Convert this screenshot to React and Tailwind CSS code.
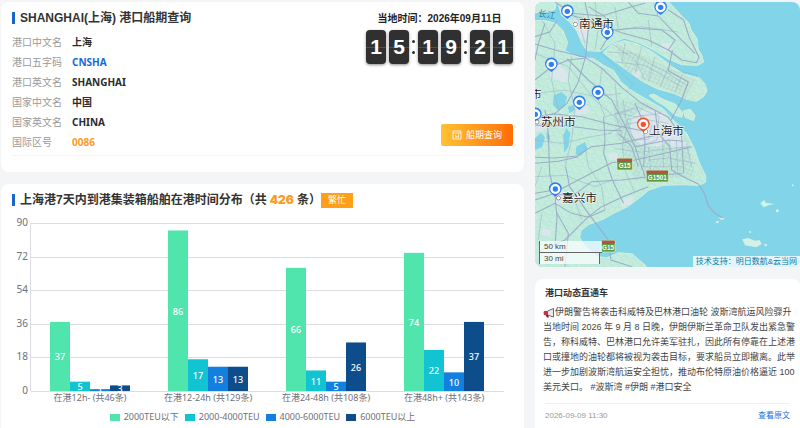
const info = [
  { label: '港口中文名', value: '上海', color: 'text-[#2b2b2b]' },
  { label: '港口五字码', value: 'CNSHA', color: 'text-[#1568d6]' },
  { label: '港口英文名', value: 'SHANGHAI', color: 'text-[#2b2b2b]' },
  { label: '国家中文名', value: '中国', color: 'text-[#2b2b2b]' },
  { label: '国家英文名', value: 'CHINA', color: 'text-[#2b2b2b]' },
  { label: '国际区号', value: '0086', color: 'text-[#ff9a1f]' },
];

const series = [
  { name: '2000TEU以下', fill: '#50e5ad', swatch: 'bg-[#50e5ad]' },
  { name: '2000-4000TEU', fill: '#12c3d2', swatch: 'bg-[#12c3d2]' },
  { name: '4000-6000TEU', fill: '#1380df', swatch: 'bg-[#1380df]' },
  { name: '6000TEU以上', fill: '#0d4d8b', swatch: 'bg-[#0d4d8b]' },
];

const groups = [
  { label: '在港12h- (共46条)', values: [37, 5, 1, 3] },
  { label: '在港12-24h (共129条)', values: [86, 17, 13, 13] },
  { label: '在港24-48h (共108条)', values: [66, 11, 5, 26] },
  { label: '在港48h+ (共143条)', values: [74, 22, 10, 37] },
];

const ticks = [0, 18, 36, 54, 72, 90];

const sans = 'font-["Noto_Sans","Noto_Sans_CJK_SC",sans-serif]';
const arial = 'font-["Liberation_Sans","Noto_Sans_CJK_SC",sans-serif]';

function CardTitle({ children }) {
  return (
    <h2 className={`flex items-center text-[12px] leading-4 font-bold text-[#333] ${arial}`}>
      <span className="mr-[5px] h-3 w-[3px] bg-[#1767c9]" />
      {children}
    </h2>
  );
}

function Digit({ value }) {
  return (
    <span className="relative flex h-[34px] w-5 items-center justify-center rounded-[4px] bg-[#303030] text-[21px] font-bold text-white shadow-[0_1px_3px_rgba(0,0,0,0.45)]">
      {value}
      <span className="absolute inset-x-0 top-1/2 h-px bg-white/15" />
    </span>
  );
}

function Colon() {
  return (
    <span className="flex w-[3px] flex-col gap-2">
      <span className="h-[3px] w-[3px] rounded-full bg-[#303030]" />
      <span className="h-[3px] w-[3px] rounded-full bg-[#303030]" />
    </span>
  );
}

function Clock() {
  return (
    <div className={`flex flex-col items-center ${arial}`}>
      <p className="text-[10px] leading-4 font-bold text-[#222]">当地时间：2026年09月11日</p>
      <div className="mt-[3px] flex items-center gap-[3px]">
        <Digit value="1" />
        <Digit value="5" />
        <Colon />
        <Digit value="1" />
        <Digit value="9" />
        <Colon />
        <Digit value="2" />
        <Digit value="1" />
      </div>
    </div>
  );
}

function PortCard() {
  return (
    <section className="rounded-lg bg-white px-[11px] pt-2 pb-4">
      <div className="flex justify-between">
        <div>
          <CardTitle>SHANGHAI(上海) 港口船期查询</CardTitle>
          <dl className={`mt-[6px] text-[10px] leading-5 ${sans}`}>
            {info.map((row) => (
              <div key={row.label} className="flex">
                <dt className="w-[60px] text-[#999]">{row.label}</dt>
                <dd className={`font-bold ${row.color}`}>{row.value}</dd>
              </div>
            ))}
          </dl>
        </div>
        <div className="flex flex-col items-end justify-between pt-[1px] pb-[6px]">
          <Clock />
          <button
            className={`flex h-[22px] w-[72px] items-center justify-center gap-1 rounded-[2px] bg-linear-to-r from-[#ffc233] to-[#ff6c02] text-[9px] text-white ${sans}`}
          >
            <svg viewBox="0 0 20 20" className="h-[10px] w-[10px]" fill="none" stroke="#fff" strokeWidth="1.6">
              <path d="M2 2h16v16H2zM2 6h16M6 10l6 5M13 9v6M6 14h4" />
            </svg>
            船期查询
          </button>
        </div>
      </div>
      <div className="mt-[3px] h-px bg-[#f5f5f6]" />
    </section>
  );
}

function BarChart() {
  const left = 30;
  const bottom = 178;
  const step = 118;
  const bar = 20;
  const y = (v) => bottom - (v * 168) / 90;
  return (
    <svg viewBox="0 0 523 192" className={`block w-full ${sans}`} fontSize="9" role="img" aria-label="在港时间分布">
      {ticks.map((t) => (
        <g key={t}>
          <line x1={left} x2="503" y1={Math.round(y(t)) + 0.5} y2={Math.round(y(t)) + 0.5} stroke="#dcdce2" />
          <text x="27" y={y(t) + 3} textAnchor="end" fill="#6e7079" fontSize="10">
            {t}
          </text>
        </g>
      ))}
      <line x1="29.5" x2="29.5" y1="10" y2="178" stroke="#dcdce2" />
      {groups.map((g, i) => {
        const center = left + step * i + step / 2;
        return (
          <g key={g.label}>
            {g.values.map((v, j) => (
              <rect
                key={j}
                x={center - bar * 2 + bar * j}
                y={y(v)}
                width={bar}
                height={bottom - y(v)}
                fill={series[j].fill}
              />
            ))}
            {g.values.map((v, j) => (
              <text
                key={j}
                x={center - bar * 1.5 + bar * j}
                y={(y(v) + bottom) / 2 + 4}
                textAnchor="middle"
                fill="#fff"
                fontWeight="500"
              >
                {v}
              </text>
            ))}
            <text x={center} y="188" textAnchor="middle" fill="#6e7079">
              {g.label}
            </text>
          </g>
        );
      })}
    </svg>
  );
}

function ChartCard() {
  return (
    <section className="flex-1 rounded-t-lg bg-white pt-2">
      <div className="px-[11px]">
        <CardTitle>
          上海港7天内到港集装箱船舶在港时间分布（共
          <span className='mx-[3px] font-["Inter",sans-serif] font-black text-[#ff9a1f]'>426</span>
          条）
          <span className="bg-[#ff9f1a] px-[7px] text-[9px] leading-[15px] font-normal text-white">繁忙</span>
        </CardTitle>
      </div>
      <div className="mt-[5px]">
        <BarChart />
      </div>
      <ul className={`mt-1 flex justify-center gap-[6px] pb-1 text-[9px] leading-4 text-[#6e7079] ${sans}`}>
        {series.map((s) => (
          <li key={s.name} className="flex items-center gap-1">
            <span className={`h-[7px] w-[10px] ${s.swatch}`} />
            {s.name}
          </li>
        ))}
      </ul>
    </section>
  );
}

const pins = [
  [97, 55],
  [377, 43],
  [217, 118],
  [49, 214],
  [189, 298],
  [133, 328],
  [1, 364],
  [61, 588],
];

const cities = [
  { name: '南通市', x: 132, y: 84, dot: [121, 73] },
  { name: '苏州市', x: 17, y: 377, dot: [6, 366] },
  { name: '上海市', x: 342, y: 405, dot: [332, 395] },
  { name: '嘉兴市', x: 81, y: 607, dot: [70, 594] },
];

const roadSigns = [
  { name: 'G15', x: 246, y: 475, w: 46 },
  { name: 'G1501', x: 334, y: 511, w: 66 },
  { name: 'G15', x: 198, y: 721, w: 42 },
];

const mainland =
  'M0 62 L30 62 L62 70 L84 92 L98 128 L90 152 L108 162 L132 172 L176 176 L206 196 L236 212 L258 246 L290 272 L342 302 L384 326 L410 356 L440 384 L456 402 L478 446 L492 486 L512 528 L512 546 L492 556 L440 554 L384 556 L342 570 L318 590 L278 620 L236 640 L204 658 L160 674 L138 692 L134 712 L150 740 L184 768 L214 774 L250 758 L292 762 L330 795 L340 810 L0 810 Z';
const northShore =
  'M66 0 L80 46 L106 68 L126 94 L142 132 L156 152 L196 154 L232 128 L268 114 L312 128 L356 150 L398 176 L440 194 L488 196 L506 186 L500 164 L490 150 L486 116 L468 90 L462 70 L440 48 L420 26 L396 0 Z';
const chongming =
  'M204 158 L232 132 L268 122 L306 132 L350 154 L402 192 L446 222 L494 234 L510 252 L516 272 L506 290 L484 304 L456 298 L416 280 L366 266 L322 244 L286 218 L252 194 Z';

const majorRoads = [
  'M0 132 L60 150 L150 172 L200 204 L260 262 L320 310 L400 352 L440 410 L446 520',
  'M0 110 L44 96 L66 62 M30 70 L10 130 L0 180',
  'M150 6 L162 60 L152 170 L128 250 L96 310 L60 340 L0 356',
  'M0 240 L50 200 L100 180 L152 174',
  'M96 176 L160 240 L230 300 L272 380 L300 440 L330 530',
  'M0 350 L60 342 L140 350 L230 374 L330 394',
  'M0 376 L100 378 L190 390 L260 392',
  'M0 472 L60 474 L126 468 L170 440 L260 430 L340 410 L400 400',
  'M0 490 L70 484 L130 470',
  'M30 330 L40 400 L44 520 L60 590 L66 650 L60 740',
  'M92 500 L104 560 L160 640 L220 720',
  'M0 580 L80 566 L160 524 L230 488 L300 480 L380 462 L470 440',
  'M0 600 L60 580 L110 590 L170 545 L260 540 L360 528 L440 520',
  'M340 560 L260 592 L200 620 L160 650 L90 720 L20 750',
  'M206 350 L210 420 L206 460 L232 540 L266 610',
  'M60 610 L110 640 L160 652 L210 630',
  'M66 640 L100 700 L90 800 M0 640 L60 610',
  'M300 310 L322 360 L330 430 L326 500',
  'M360 330 L370 400 L404 440 L410 510 L440 528 L490 552',
  'M300 440 L400 420 L446 424',
  'M250 400 L290 440 L310 500',
  'M218 716 L228 780 L290 800',
  'M280 6 L310 40 L370 48 L400 80 L480 160',
  'M86 40 L160 60 L260 98 L340 120 L400 150 L440 180 L484 188 L492 172 L462 110 L446 60 L400 30',
  'M160 20 L210 50 L220 110 L196 150',
  'M60 6 L110 40 L200 48 L290 20 L330 10',
  'M384 6 L366 44 M400 150 L420 120 L380 90 L300 84 L240 90',
  'M412 150 L400 212 L460 246 L440 300 L408 360',
];

const minorRoads = [
  'M0 160 L100 200 L180 300 L250 360 L300 420',
  'M20 60 L60 130 L50 240 L70 330',
  'M110 170 L100 240 L120 330 L110 420 L90 500',
  'M200 206 L190 300 L210 350 L290 330',
  'M240 250 L250 340 L300 350 L380 340',
  'M0 280 L90 270 L180 290 L260 280',
  'M0 420 L80 430 L170 410 L230 400',
  'M0 530 L90 526 L180 560 L230 540',
  'M150 440 L160 500 L200 560 L210 630',
  'M20 500 L0 560 M20 640 L10 720 M120 600 L140 660',
  'M264 300 L276 380 L262 440 L270 510 L300 580',
  'M240 340 L310 322 L372 350 L366 420 L310 440 L262 410 Z',
  'M276 360 L322 346 L350 376 L340 418 L296 420 Z',
  'M220 400 L280 372 L340 360 L400 370',
  'M240 446 L320 456 L400 446 L460 440',
  'M382 400 L386 500 M424 420 L428 516 M456 440 L470 500 M340 440 L350 540',
  'M340 480 L400 474 L480 490 M320 500 L440 500',
  'M100 30 L130 60 L150 130 M180 6 L190 90 L180 150',
  'M240 20 L250 90 L320 80 L430 96 M340 60 L350 140',
  'M230 130 L300 180 L330 240 M270 130 L260 190 M320 140 L300 220 M360 170 L340 244 M400 200 L376 262 M440 226 L420 276',
  'M216 156 L290 160 L400 220 L460 260 M240 186 L330 196 L440 260',
];

const lakes = [
  'M56 286 L80 276 L96 290 L90 318 L70 330 L54 316 Z',
  'M98 320 L116 314 L120 330 L104 340 Z',
  'M84 408 L94 384 L106 400 L100 440 L88 458 Z',
  'M124 440 L150 426 L158 446 L136 468 L122 462 Z',
  'M0 414 L18 398 L30 412 L22 440 L0 450 Z',
  'M36 392 L46 410 L42 430 L34 414 Z',
];

const urban = [
  'M290 350 L330 326 L384 336 L408 366 L412 410 L372 440 L316 436 L286 400 Z',
  'M110 60 L150 64 L160 100 L150 126 L134 110 Z',
  'M44 200 L70 190 L100 220 L96 246 L74 244 L46 230 Z',
  'M50 20 L90 20 L92 52 L64 44 Z',
  'M378 132 L404 130 L410 146 L388 152 Z',
  'M290 216 L320 212 L316 232 L298 232 Z',
  'M116 318 L158 316 L164 340 L120 344 Z',
  'M220 460 L248 458 L250 480 L222 480 Z',
  'M260 600 L296 588 L290 612 L262 620 Z',
  'M0 370 L30 352 L40 386 L4 396 Z',
  'M60 570 L90 576 L84 612 L56 606 Z',
  'M20 684 L50 690 L44 712 L22 706 Z',
  'M400 396 L440 400 L456 440 L410 444 Z',
];

function Pin({ x, y, color }) {
  return (
    <g transform={`translate(${x} ${y})`}>
      <path d="M0 2 L-11 -7 A19 19 0 1 1 11 -7 Z" fill={color} />
      <circle cy="-21" r="15" fill="#fff" />
      <circle cy="-21" r="8" fill={color} />
    </g>
  );
}

function PortMap() {
  return (
    <section className="relative overflow-hidden rounded-lg">
      <svg
        viewBox="0 6 795 795"
        className="block aspect-square w-full bg-[#82d5e8] font-['Noto_Sans_CJK_SC',sans-serif]"
        role="img"
        aria-label="上海港地图"
      >
        <defs>
          <pattern id="fields" width="27" height="23" patternUnits="userSpaceOnUse" patternTransform="rotate(14)">
            <path d="M0 3 H16 M16 0 V14 M6 14 H27 M24 14 V23 M6 14 V23" stroke="#aed6cf" strokeWidth="1.2" fill="none" />
          </pattern>
          <pattern id="blocks" width="12" height="11" patternUnits="userSpaceOnUse" patternTransform="rotate(24)">
            <path d="M0 3 H12 M4 0 V11" stroke="#a5c0c4" strokeWidth="1.1" fill="none" />
          </pattern>
          <clipPath id="land">
            <path d={mainland} />
            <path d={northShore} />
            <path d={chongming} />
          </clipPath>
        </defs>
        <g stroke="#d6efdf" strokeWidth="3" fill="#c4eedd">
          <path d="M0 0 H66 L60 28 L48 34 L0 38 Z" />
          <path d={mainland} />
          <path d={northShore} />
          <path d={chongming} fill="#c8eedb" />
          <path d="M342 286 L356 282 L384 298 L420 312 L444 338 L440 352 L420 346 L390 318 L362 302 Z" />
          <path d="M446 332 L466 328 L480 346 L476 362 L450 352 Z" />
        </g>
        <g clipPath="url(#land)">
          <rect y="0" width="560" height="810" fill="url(#fields)" />
          <path d="M240 130 L480 240 L450 296 L270 210 Z M236 300 L340 310 L460 420 L480 530 L300 540 L240 400 Z" fill="url(#blocks)" />
          {urban.map((d) => (
            <path key={d} d={d} fill="#dfe5ef" opacity="0.85" />
          ))}
          {lakes.map((d) => (
            <path key={d} d={d} fill="#82d5e8" />
          ))}
          <g fill="none" strokeLinejoin="round">
            {minorRoads.map((d) => (
              <path key={d} d={d} stroke="#9bb4c8" strokeWidth="2" opacity="0.85" />
            ))}
          </g>
        </g>
        <g fill="none" stroke="#98a7c5" strokeWidth="3.2" strokeLinejoin="round" opacity="0.9">
          {majorRoads.map((d) => (
            <path key={d} d={d} />
          ))}
          <path d="M490 552 L508 580 L520 618 L540 640 L562 654" />
        </g>
        <path d="M198 156 L294 254 L276 272 M402 192 L440 214 L490 228" fill="none" stroke="#7797ac" strokeWidth="1.5" strokeDasharray="4 4" />
        <g fill="#d5f0e4">
          <path d="M622 718 L640 714 L660 722 L674 720 L680 732 L664 742 L630 736 Z" />
          <path d="M676 610 L688 600 L692 608 L718 612 L700 616 L686 622 Z" />
          <path d="M550 652 L570 656 L560 661 Z" />
          <circle cx="547" cy="666" r="4" />
          <circle cx="727" cy="632" r="4.5" />
          <circle cx="773" cy="556" r="3" />
          <circle cx="645" cy="696" r="3" />
          <circle cx="692" cy="735" r="4" />
        </g>
        <text x="8" y="48" fontSize="26" fill="#2f7f96" transform="rotate(10 8 48)">
          长江
        </text>
        {roadSigns.map((s) => (
          <g key={s.x}>
            <rect x={s.x} y={s.y} width={s.w} height="35" rx="3" fill="#5c9a3f" stroke="#e8e8c8" strokeWidth="2" />
            <rect x={s.x + 1} y={s.y + 1} width={s.w - 2} height="10" fill="#b3544a" />
            <text
              x={s.x + s.w / 2}
              y={s.y + 29}
              textAnchor="middle"
              fontSize="19"
              fontWeight="bold"
              fontFamily="Liberation Sans, sans-serif"
              fill="#fff"
            >
              {s.name}
            </text>
          </g>
        ))}
        {pins.map(([x, y]) => (
          <Pin key={`${x}-${y}`} x={x} y={y} color="#2f7fee" />
        ))}
        <g fontSize="35" fill="#222" stroke="#fff" strokeWidth="3" paintOrder="stroke">
          {cities.map((c) => (
            <g key={c.name}>
              <circle cx={c.dot[0]} cy={c.dot[1]} r="5.5" fill="#fff" stroke="#333" strokeWidth="2.5" />
              <text x={c.x} y={c.y}>
                {c.name}
              </text>
            </g>
          ))}
          <text x="-12" y="294" fontSize="32">
            市
          </text>
        </g>
        <Pin x={325} y={394} color="#f0532d" />
      </svg>
      <div className={`absolute bottom-[3px] left-1 text-[8px] leading-[11px] text-[#444] ${arial}`}>
        <div className="w-[63px] border-b border-l border-[#666] bg-white/70 pl-1">50 km</div>
        <div className="w-[61px] border-r border-l border-[#666] bg-white/70 pl-1">30 mi</div>
      </div>
      <a
        href="#"
        className={`absolute right-0 bottom-0 bg-white/75 px-[3px] text-[8px] leading-[11px] text-[#0f78a8] ${arial}`}
      >
        技术支持：明日数航&amp;云当网
      </a>
    </section>
  );
}

function NewsCard() {
  return (
    <section className={`flex-1 rounded-t-lg bg-white pt-[6px] ${arial}`}>
      <h3 className="px-[10px] text-[9px] leading-4 font-bold text-[#333]">港口动态直通车</h3>
      <div className="mt-1 pr-1 pl-2 text-[9px] leading-[15px] text-[#444]">
        <p className="flex items-center">
          <svg viewBox="0 0 24 20" className="h-[10px] w-3">
            <path d="M9 6 L21 1 V18 L9 14 Z" fill="#e9e9ee" stroke="#5b5560" strokeWidth="1.8" />
            <path d="M2 6 H10 V14 H2 Q0 10 2 6Z" fill="#c92f45" />
            <path d="M5 14 H10 L12 19 H8 Z" fill="#6e2236" />
          </svg>
          伊朗警告将袭击科威特及巴林港口油轮 波斯湾航运风险骤升
        </p>
        <p>
          当地时间 2026 年 9 月 8 日晚，伊朗伊斯兰革命卫队发出紧急警告，称科威特、巴林港口允许美军驻扎，因此所有停靠在上述港口或撞地的油轮都将被视为袭击目标，要求船员立即撤离。此举进一步加剧波斯湾航运安全担忧，推动布伦特原油价格逼近
          100 美元关口。 #波斯湾 #伊朗 #港口安全
        </p>
      </div>
      <div className="mx-[10px] mt-2 flex justify-between border-t border-[#f0f0f0] pt-1 text-[8px] leading-4">
        <time className="text-[#999]">2026-09-09 11:30</time>
        <a href="#" className="text-[#1473dc]">
          查看原文
        </a>
      </div>
    </section>
  );
}

export default function App() {
  return (
    <div className="flex min-h-screen gap-[11px] bg-[#f4f5f7] pt-[2px] pl-[1px]">
      <main className="flex min-w-0 flex-1 flex-col gap-3">
        <PortCard />
        <ChartCard />
      </main>
      <aside className="flex w-1/3 max-w-[265px] flex-col gap-3">
        <PortMap />
        <NewsCard />
      </aside>
    </div>
  );
}
